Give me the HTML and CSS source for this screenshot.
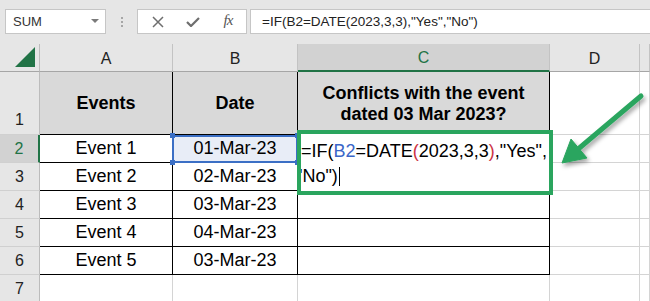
FILE: index.html
```html
<!DOCTYPE html>
<html lang="en">
<head>
  <meta charset="UTF-8" />
  <title>Conflicts check</title>
  <link rel="stylesheet" href="styles.css">
</head>
<body>
  <div class="topbar">
    <div class="namebox">
      <span>SUM</span>
      <span class="caret"></span>
    </div>
    <div class="grip"><i></i><i></i><i></i></div>
    <div class="fxbox">
      <span class="slot">
        <svg width="12" height="12" viewBox="0 0 12 12"><path d="M1 1 L11 11 M11 1 L1 11" stroke="#6e6e6e" stroke-width="1.5" fill="none"/></svg>
      </span>
      <span class="slot">
        <svg width="14" height="10" viewBox="0 0 14 10"><path d="M1 5 L5 9 L13 1" stroke="#6e6e6e" stroke-width="2.2" fill="none"/></svg>
      </span>
      <span class="slot fx">fx</span>
    </div>
    <div class="formula">=IF(B2=DATE(2023,3,3),"Yes","No")</div>
  </div>

  <div class="sheet">
    <!-- column heads -->
    <div class="cell corner">
      <svg width="20" height="20" viewBox="0 0 20 20"><polygon points="20,0 20,20 0,20" fill="#217346"/></svg>
    </div>
    <div class="cell ch">A</div>
    <div class="cell ch">B</div>
    <div class="cell ch sel">C</div>
    <div class="cell ch">D</div>
    <div class="cell ch"></div>

    <!-- row 1 -->
    <div class="cell rh bottom">1</div>
    <div class="cell t hd">Events</div>
    <div class="cell t hd">Date</div>
    <div class="cell t hd">Conflicts with the event<br>dated 03 Mar 2023?</div>
    <div class="cell"></div>
    <div class="cell"></div>

    <!-- row 2 -->
    <div class="cell rh sel">2</div>
    <div class="cell t">Event 1</div>
    <div class="cell t ref">01-Mar-23
      <span class="frame">
        <i class="h tl"></i><i class="h tr"></i><i class="h bl"></i><i class="h br"></i>
      </span>
    </div>
    <div class="cell t"></div>
    <div class="cell"></div>
    <div class="cell"></div>

    <div class="cell rh">3</div>
    <div class="cell t">Event 2</div>
    <div class="cell t">02-Mar-23</div>
    <div class="cell t"></div>
    <div class="cell"></div>
    <div class="cell"></div>

    <div class="cell rh">4</div>
    <div class="cell t">Event 3</div>
    <div class="cell t">03-Mar-23</div>
    <div class="cell t"></div>
    <div class="cell"></div>
    <div class="cell"></div>

    <div class="cell rh">5</div>
    <div class="cell t">Event 4</div>
    <div class="cell t">04-Mar-23</div>
    <div class="cell t"></div>
    <div class="cell"></div>
    <div class="cell"></div>

    <div class="cell rh">6</div>
    <div class="cell t">Event 5</div>
    <div class="cell t">03-Mar-23</div>
    <div class="cell t"></div>
    <div class="cell"></div>
    <div class="cell"></div>

    <div class="cell rh">7</div>
    <div class="cell"></div>
    <div class="cell"></div>
    <div class="cell"></div>
    <div class="cell"></div>
    <div class="cell"></div>

    <!-- in-cell editor for C2 -->
    <div class="editor">
      <div class="line">=IF(<span class="b2">B2</span>=DATE<span class="par">(</span>2023,3,3<span class="par">)</span>,"Yes",</div>
      <div class="line second">"No")<span class="cursor"></span></div>
    </div>

    <svg class="arrow" width="650" height="259" viewBox="0 44 650 259">
      <defs>
        <filter id="shadow" x="-20%" y="-20%" width="150%" height="150%">
          <feDropShadow dx="2" dy="3" stdDeviation="2" flood-color="#000" flood-opacity="0.35"/>
        </filter>
      </defs>
      <g filter="url(#shadow)" fill="#2aa55e" stroke="#2aa55e">
        <line x1="641" y1="96" x2="577" y2="150" stroke-width="5" stroke-linecap="round"/>
        <polygon points="562,163 571,139 587,158" stroke-width="1" stroke-linejoin="round"/>
      </g>
    </svg>
  </div>
</body>
</html>
```

FILE: styles.css
```css
body {
  margin: 0;
  width: 650px;
  height: 301px;
  overflow: hidden;
  background: #e6e6e6;
  font-family: "Liberation Sans", Arial, sans-serif;
  color: #000;
}

.topbar {
  display: flex;
  align-items: flex-start;
  height: 44px;
  padding: 9px 0 0 5px;
  box-sizing: border-box;
}

.namebox {
  display: flex;
  align-items: center;
  justify-content: space-between;
  width: 101px;
  height: 25px;
  box-sizing: border-box;
  padding: 0 6px 0 7px;
  background: #fff;
  border: 1px solid #c6c6c6;
  font-size: 13px;
  color: #333;
}

.caret {
  width: 0;
  height: 0;
  border-left: 4px solid transparent;
  border-right: 4px solid transparent;
  border-top: 4px solid #7a7a7a;
  margin-top: -2px;
}

.grip {
  width: 31px;
  height: 25px;
  display: flex;
  flex-direction: column;
  align-items: center;
  justify-content: center;
  gap: 2px;
}

.grip i {
  width: 2px;
  height: 2px;
  background: #a6a6a6;
}

.fxbox {
  display: grid;
  grid-template-columns: 40px 30px 40px;
  width: 110px;
  height: 25px;
  box-sizing: border-box;
  background: #fff;
  border: 1px solid #c6c6c6;
  margin-right: 3px;
}

.slot {
  display: flex;
  align-items: center;
  justify-content: center;
}

.fx {
  font-family: "Liberation Serif", serif;
  font-style: italic;
  font-size: 15px;
  color: #555;
  letter-spacing: -1px;
  padding-bottom: 2px;
}

.formula {
  flex: 1;
  height: 25px;
  box-sizing: border-box;
  margin-right: -2px;
  padding-left: 11px;
  background: #fff;
  border: 1px solid #c6c6c6;
  font-size: 13.5px;
  line-height: 23px;
  color: #222;
  white-space: nowrap;
}

.sheet {
  position: relative;
  display: grid;
  grid-template-columns: 40px 133px 125px 252px 90px 10px;
  grid-template-rows: 28px 63px repeat(6, 28px);
  background: #fff;
}

.cell {
  box-sizing: border-box;
  border-right: 1px solid #d4d4d4;
  border-bottom: 1px solid #d4d4d4;
  display: flex;
  align-items: center;
  justify-content: center;
  font-size: 18px;
  white-space: nowrap;
}

.corner {
  background: #e6e6e6;
  border-right-color: #bcbcbc;
  border-bottom-color: #a6a6a6;
  justify-content: flex-end;
  align-items: flex-end;
  padding: 0 4px 4px 0;
}

.ch {
  background: #e6e6e6;
  border-right-color: #c3c3c3;
  border-bottom-color: #a6a6a6;
  font-size: 16px;
  color: #222;
  padding-top: 2px;
}

.rh {
  background: #e6e6e6;
  border-right-color: #bcbcbc;
  border-bottom-color: #d0d0d0;
  font-size: 16px;
  color: #222;
}

.rh.bottom {
  align-items: flex-end;
  padding-bottom: 5px;
}

.ch.sel {
  background: #d2d2d2;
  color: #217346;
  border-bottom: 2px solid #217346;
}

.rh.sel {
  background: #d2d2d2;
  color: #217346;
  border-right: 2px solid #217346;
}

.t {
  border-right-color: #000;
  border-bottom-color: #000;
}

.hd {
  background: #d9d9d9;
  font-weight: bold;
  text-align: center;
  line-height: 21px;
  padding-top: 1px;
}

.ref {
  position: relative;
  background: #e8edf7;
}

.frame {
  position: absolute;
  top: 0;
  left: -1px;
  right: -1px;
  bottom: -1px;
  border: 2px solid #3b6fc5;
}

.h {
  position: absolute;
  width: 5px;
  height: 5px;
  background: #3b6fc5;
}

.tl { top: -4px; left: -4px; }
.tr { top: -4px; right: -4px; }
.bl { bottom: -4px; left: -4px; }
.br { bottom: -4px; right: -4px; }

.editor {
  position: absolute;
  left: 297px;
  top: 86px;
  width: 256px;
  height: 65px;
  box-sizing: border-box;
  border: 4px solid #2aa55e;
  background: #fff;
  overflow: hidden;
  padding-top: 5px;
  font-size: 18px;
  line-height: 25px;
  white-space: nowrap;
  z-index: 2;
}

.second {
  margin-left: -5px;
}

.b2 {
  color: #3a66c8;
}

.par {
  color: #cc3344;
}

.cursor {
  display: inline-block;
  width: 1px;
  height: 19px;
  background: #000;
  vertical-align: -4px;
  margin-left: 1px;
}

.arrow {
  position: absolute;
  left: 0;
  top: 0;
  pointer-events: none;
  z-index: 3;
}
```
